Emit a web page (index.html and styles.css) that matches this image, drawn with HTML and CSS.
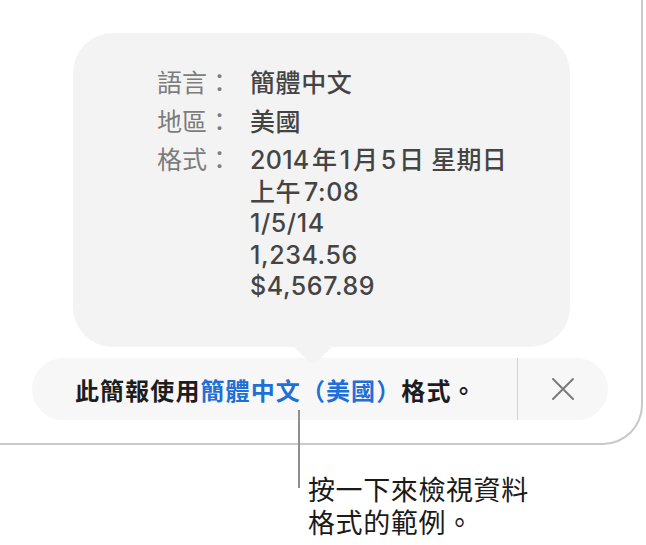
FILE: index.html
```html
<!DOCTYPE html>
<html lang="zh-Hant">
<head>
<meta charset="utf-8">
<link rel="stylesheet" href="styles.css">
</head>
<body>
<div class="window">
  <div class="popover">
    <div class="info">
      <div class="label">語言：</div>
      <div class="value">簡體中文</div>
      <div class="label">地區：</div>
      <div class="value">美國</div>
      <div class="label">格式：</div>
      <div class="value lines">
        <span class="date">2014&#8202;年&#8202;1&#8202;月&#8202;5&#8202;日 星期日</span>
        <span>上午&#8202;7:08</span>
        <span>1/5/14</span>
        <span>1,234.56</span>
        <span>$4,567.89</span>
      </div>
    </div>
  </div>
  <div class="banner">
    <div class="msg">此簡報使用<span class="link">簡體中文（美國）</span>格式。</div>
    <div class="close">
      <svg width="24" height="24" viewBox="0 0 24 24"><path d="M2 2 L22 22 M22 2 L2 22" stroke="#7b7b7b" stroke-width="2" stroke-linecap="round" fill="none"/></svg>
    </div>
  </div>
</div>
<div class="leader"></div>
<div class="caption">按一下來檢視資料<br>格式的範例。</div>
</body>
</html>
```
FILE: styles.css
```css
html, body {
  margin: 0;
  padding: 0;
  background: #ffffff;
}
body {
  width: 646px;
  height: 545px;
  overflow: hidden;
  position: relative;
  font-family: "Inter", "Noto Sans CJK TC", sans-serif;
}
.window {
  box-sizing: border-box;
  width: 643px;
  height: 445px;
  padding-top: 33px;
  border-right: 2px solid #c9c9c9;
  border-bottom: 2px solid #c9c9c9;
  border-bottom-right-radius: 40px;
  background: #ffffff;
}
.popover {
  position: relative;
  z-index: 2;
  box-sizing: border-box;
  margin-left: 73px;
  width: 497px;
  height: 314px;
  padding: 35px 0 0 84px;
  border-radius: 40px;
  background: #f3f3f3;
}
.popover::after {
  content: "";
  position: absolute;
  left: 226px;
  top: 299px;
  width: 28px;
  height: 28px;
  background: #f3f3f3;
  transform: rotate(45deg);
  border-bottom-right-radius: 6px;
}
.info {
  display: grid;
  grid-template-columns: 93px auto;
  row-gap: 7px;
  font-size: 25px;
  line-height: 31.5px;
}
.label {
  color: #7c7c7c;
  font-weight: 400;
}
.value {
  color: #444444;
  font-weight: 500;
  letter-spacing: 0.6px;
}
.lines {
  display: flex;
  flex-direction: column;
}
.date {
  letter-spacing: 0.3px;
}
.banner {
  display: flex;
  align-items: stretch;
  margin: 11px 0 0 32px;
  width: 576px;
  height: 62px;
  border-radius: 31px;
  background: #f7f7f7;
}
.msg {
  flex: 1;
  display: flex;
  align-items: center;
  padding-left: 43px;
  font-size: 24px;
  letter-spacing: 1.1px;
  font-weight: 700;
  color: #1d1d1f;
}
.link {
  color: #1f6fd6;
}
.close {
  width: 90px;
  border-left: 1.5px solid #d3d3d3;
  display: flex;
  align-items: center;
  justify-content: center;
}
.leader {
  position: absolute;
  left: 298px;
  top: 410px;
  width: 2px;
  height: 78px;
  background: #8e8e8e;
}
.caption {
  margin: 29px 0 0 308px;
  font-size: 27px;
  line-height: 33px;
  letter-spacing: 0.6px;
  color: #1a1a1a;
  font-weight: 400;
}
```
